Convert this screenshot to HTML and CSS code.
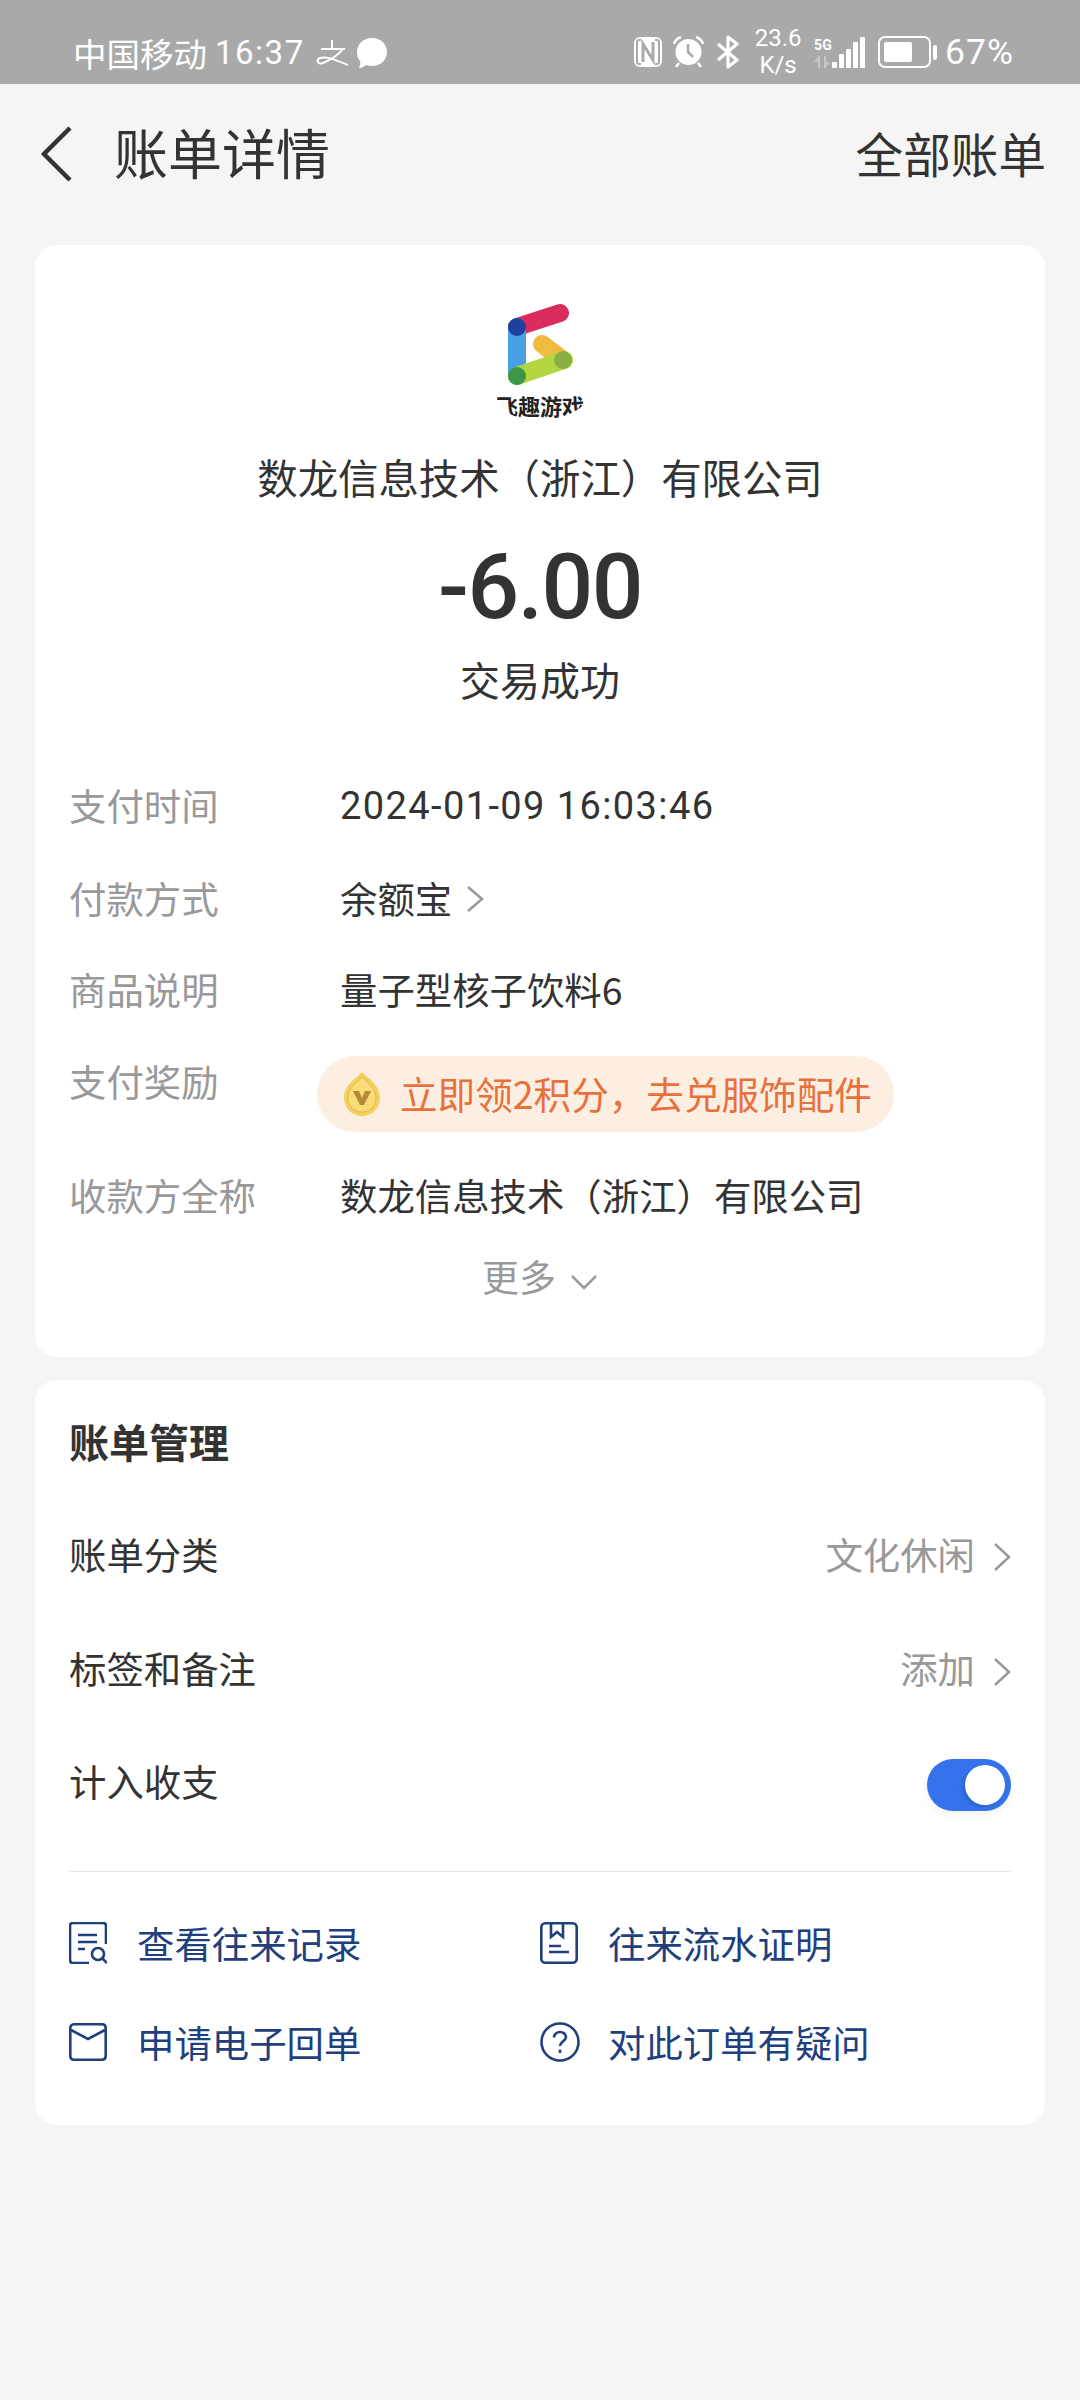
FILE: index.html
```html
<!DOCTYPE html>
<html lang="zh-CN">
<head>
    <meta charset="UTF-8">
    <meta name="viewport" content="width=device-width, initial-scale=1.0">
    <title>账单详情</title>
    <link rel="stylesheet" href="styles.css">
</head>
<body>
    <!-- 状态栏 -->
    <div class="status">
        <div class="status-left">
            <span class="carrier">中国移动</span>
            <span class="clock">16:37</span>
            <svg class="ic-zhi" width="32" height="28" viewBox="0 0 32 28" fill="none" stroke="#fff" stroke-width="2"><path d="M5 10H29M16 1V10M27 10C22 17 14 21 7 24C1 26 0 20 4 19C10 17 20 21 32 26"/></svg>
            <svg class="ic-chat" width="32" height="32" viewBox="0 0 32 32"><path fill="#fff" d="M16 1C24.500 1 31 7 31 15C31 23 24.500 29 16 29C14 29 12 28.500 10 28C8.500 29.500 6 31 3 31C4 29 4.500 26.500 4.200 24.500C2 22 1 18.500 1 15C1 7 7.500 1 16 1Z"/></svg>
        </div>
        <div class="status-right">
            <svg class="ic-nfc" width="28" height="30" viewBox="0 0 28 30"><rect width="28" height="30" rx="6" fill="#fff"/><path d="M7 3H5C3.500 3 3 4 3 5V25C3 26 3.500 27 5 27H7M21 3H23C24.500 3 25 4 25 5V25C25 26 24.500 27 23 27H21" fill="none" stroke="#a9a9a9" stroke-width="2"/><path d="M9 25V7L19 23V5" fill="none" stroke="#a9a9a9" stroke-width="3"/></svg>
            <svg class="ic-alarm" width="31" height="32" viewBox="0 0 31 32"><circle cx="15.500" cy="16" r="13" fill="#fff"/><path d="M15 8V16L20 21" fill="none" stroke="#a9a9a9" stroke-width="2.500"/><path d="M1 8C2 4 5 2 8 1M30 8C29 4 26 2 23 1M6 27L3 31M25 27L28 31" fill="none" stroke="#fff" stroke-width="2.500"/></svg>
            <svg class="ic-bt" width="24" height="34" viewBox="0 0 24 34"><path d="M2 9L21 25L12 32V2L21 9L2 25" fill="none" stroke="#fff" stroke-width="3.200" stroke-linejoin="round"/></svg>
            <div class="speed"><span>23.6</span><span>K/s</span></div>
            <div class="signal">
                <div class="net"><span>5G</span><svg width="16" height="12" viewBox="0 0 16 12"><path d="M4 0V12H6V0ZM0 6L4 1V6ZM10 0V12H12V0ZM12 6V11L16 6Z" fill="#fff" opacity=".35"/></svg></div>
                <div class="bars"><i class="b1"></i><i class="b2"></i><i class="b3"></i><i class="b4"></i><i class="b5"></i></div>
            </div>
            <div class="battery"><div class="cell"><div class="level"></div></div><div class="tip"></div></div>
            <span class="pct">67%</span>
        </div>
    </div>

    <!-- 标题栏 -->
    <div class="header">
        <svg class="back" width="32" height="56" viewBox="0 0 32 56" fill="none" stroke="#333" stroke-width="4.500"><path d="M30 2L4 28L30 54"/></svg>
        <div class="title">账单详情</div>
        <div class="all">全部账单</div>
    </div>

    <!-- 账单信息 -->
    <div class="card info">
        <div class="logo">
            <svg width="80" height="88" viewBox="0 0 80 88" fill="none" stroke-width="18" stroke-linecap="round">
                <path d="M17 24L60 10" stroke="#d92c5c"/>
                <path d="M42 41L63 57" stroke="#efbb40"/>
                <path d="M17 24V73" stroke="#47a0e4"/>
                <path d="M17 73L64 57" stroke="#b3d53f"/>
                <circle cx="17" cy="24" r="9" fill="#1f409c" stroke="none"/>
                <circle cx="17" cy="73" r="9" fill="#3d9548" stroke="none"/>
                <circle cx="63" cy="57" r="9" fill="#8ab045" stroke="none"/>
            </svg>
            <div class="logo-name">飞趣游戏</div>
        </div>
        <div class="payee">数龙信息技术（浙江）有限公司</div>
        <div class="amount">-6.00</div>
        <div class="state">交易成功</div>

        <div class="row"><span class="label">支付时间</span><span class="value date">2024-01-09 16:03:46</span></div>
        <div class="row">
            <span class="label">付款方式</span><span class="value">余额宝</span>
            <svg class="arrow-sm" width="20" height="30" viewBox="0 0 20 30" fill="none" stroke="#999" stroke-width="2.500"><path d="M3 3L17 15L3 27"/></svg>
        </div>
        <div class="row"><span class="label">商品说明</span><span class="value">量子型核子饮料6</span></div>
        <div class="row row-gift">
            <span class="label">支付奖励</span>
            <div class="pill">
                <svg class="coin" width="38" height="46" viewBox="0 0 38 46">
                    <path d="M19 1C24 7 37 13 37 27C37 37 29 45 19 45C9 45 1 37 1 27C1 13 14 7 19 1Z" fill="#f3cf5c"/>
                    <path d="M19 6C23 11 33 16 33 27C33 35 27 41 19 41C11 41 5 35 5 27C5 16 15 11 19 6Z" fill="#f8dc78" stroke="#e6bb45"/>
                    <path d="M10 20H16L19 27L22 20H28L21 34H17Z" fill="#b58a35"/>
                </svg>
                <span class="pill-text">立即领2积分，去兑服饰配件</span>
            </div>
        </div>
        <div class="row"><span class="label">收款方全称</span><span class="value">数龙信息技术（浙江）有限公司</span></div>
        <div class="more">
            <span>更多</span>
            <svg width="28" height="18" viewBox="0 0 28 18" fill="none" stroke="#999" stroke-width="2.500"><path d="M2 3L14 15L26 3"/></svg>
        </div>
    </div>

    <!-- 账单管理 -->
    <div class="card manage">
        <div class="manage-title">账单管理</div>
        <div class="item">
            <span>账单分类</span>
            <div class="item-right"><span>文化休闲</span><svg width="18" height="30" viewBox="0 0 18 30" fill="none" stroke="#999" stroke-width="2.500"><path d="M2 2L16 15L2 28"/></svg></div>
        </div>
        <div class="item">
            <span>标签和备注</span>
            <div class="item-right"><span>添加</span><svg width="18" height="30" viewBox="0 0 18 30" fill="none" stroke="#999" stroke-width="2.500"><path d="M2 2L16 15L2 28"/></svg></div>
        </div>
        <div class="item">
            <span class="item-name">计入收支</span>
            <div class="switch"><div class="knob"></div></div>
        </div>
        <div class="links">
            <div class="link">
                <svg width="38" height="42" viewBox="0 0 38 42" fill="none" stroke="#1f3f7d" stroke-width="2.600"><path d="M37 22V4C37 2 36 1 34 1H4C2 1 1 2 1 4V38C1 40 2 41 4 41H20"/><path d="M9 13H28M9 20H28M9 27H16"/><circle cx="29" cy="32" r="6"/><path d="M33 36L38 41"/></svg>
                <span>查看往来记录</span>
            </div>
            <div class="link">
                <svg width="38" height="42" viewBox="0 0 38 42" fill="none" stroke="#1f3f7d" stroke-width="2.600"><rect x="1.300" y="1.300" width="35.400" height="39.400" rx="4"/><path d="M11 2V15L17 10L23 15V2M9 24H21M9 30H29"/></svg>
                <span>往来流水证明</span>
            </div>
            <div class="link">
                <svg width="38" height="38" viewBox="0 0 38 38" fill="none" stroke="#1f3f7d" stroke-width="2.600"><path d="M5 1.300H33C35.500 1.300 36.700 3 36.700 5V33C36.700 35.500 35.500 36.700 33 36.700H5C2.500 36.700 1.300 35.500 1.300 33V5C1.300 3 2.500 1.300 5 1.300Z"/><path d="M2 7L19 16L36 7"/></svg>
                <span>申请电子回单</span>
            </div>
            <div class="link">
                <svg class="ic-ask" width="40" height="40" viewBox="0 0 40 40" fill="none" stroke="#1f3f7d" stroke-width="2.600"><circle cx="20" cy="20" r="18.500"/><path d="M14 15.500C14 12 17 10 20 10C23 10 26 12 26 15C26 19 20 19.500 20 24"/><path d="M20 27.500V31"/></svg>
                <span>对此订单有疑问</span>
            </div>
        </div>
    </div>
</body>
</html>
```

FILE: styles.css
```css
*{
    margin: 0;
    padding: 0;
    box-sizing: border-box;
}
body{
    width: 1080px;
    height: 2400px;
    background: #f5f5f5;
    color: #333;
    font-family: "Noto Sans CJK SC", "Noto Sans", sans-serif;
    overflow: hidden;
}
svg{
    display: block;
    flex: none;
}

/* 状态栏 */
.status{
    height: 84px;
    background: #a9a9a9;
    color: #fff;
    padding: 31px 66px 0 73px;
    display: flex;
    justify-content: space-between;
    align-items: flex-start;
}
.status-left{
    display: flex;
    align-items: center;
    height: 44px;
}
.carrier{
    font-size: 33.500px;
    line-height: 44px;
}
.clock{
    font-family: Roboto, sans-serif;
    font-size: 33px;
    line-height: 44px;
    margin-left: 8px;
    letter-spacing: 1.500px;
}
.ic-zhi{
    margin-left: 11px;
}
.ic-chat{
    margin-left: 8px;
}
.status-right{
    display: flex;
    align-items: center;
    height: 44px;
    gap: 13px;
    margin-top: -1px;
}
.ic-nfc{
    margin-right: -2px;
}
.ic-alarm{
    margin-right: -1px;
}
.speed{
    width: 50px;
    font-family: Roboto, sans-serif;
    font-size: 24px;
    line-height: 27px;
    text-align: center;
    display: flex;
    flex-direction: column;
}
.signal{
    display: flex;
    align-items: flex-end;
    height: 32px;
    gap: 1px;
    margin-left: -2px;
}
.net{
    width: 17px;
    font-family: Roboto, sans-serif;
    font-weight: 700;
    font-size: 14px;
    line-height: 18px;
    display: flex;
    flex-direction: column;
    gap: 2px;
}
.bars{
    display: flex;
    align-items: flex-end;
    gap: 2px;
}
.bars i{
    display: block;
    width: 5px;
    background: #fff;
    border-radius: 1px;
}
.bars .b1{ height: 6px; }
.bars .b2{ height: 14px; }
.bars .b3{ height: 19px; }
.bars .b4{ height: 26px; }
.bars .b5{ height: 31px; }
.battery{
    display: flex;
    align-items: center;
    gap: 2px;
}
.cell{
    width: 53px;
    height: 32px;
    border: 2.500px solid #fff;
    border-radius: 7px;
    padding: 4px;
}
.level{
    width: 28px;
    height: 100%;
    background: #fff;
    border-radius: 2px;
}
.tip{
    width: 4px;
    height: 15px;
    background: #fff;
    border-radius: 2px;
}
.pct{
    font-family: Roboto, sans-serif;
    font-size: 35.500px;
    line-height: 44px;
    margin-left: -5px;
    letter-spacing: 1px;
}

/* 标题栏 */
.header{
    height: 161px;
    padding: 0 34px 22px 40px;
    display: flex;
    align-items: center;
}
.title{
    font-size: 54px;
    margin-left: 42px;
    line-height: 70px;
    margin-top: -3px;
}
.all{
    font-size: 47.600px;
    margin-left: auto;
    line-height: 70px;
    margin-top: -1px;
}

.card{
    margin: 0 35px;
    width: 1010px;
    background: #fff;
    border-radius: 22px;
}

/* 账单信息 */
.info{
    height: 1112px;
    padding: 30px 34px 0;
}
.logo{
    width: 140px;
    height: 146px;
    margin: 0 auto;
    border-radius: 50%;
    overflow: hidden;
    padding-top: 28px;
    display: flex;
    flex-direction: column;
    align-items: center;
}
.logo-name{
    margin-top: 0;
    font-size: 22px;
    font-weight: 700;
    line-height: 28px;
    color: #222;
    white-space: nowrap;
}
.payee{
    margin-top: 26px;
    font-size: 40.400px;
    line-height: 60px;
    text-align: center;
}
.amount{
    margin-top: 30px;
    font-family: Roboto, sans-serif;
    font-weight: 500;
    font-size: 91px;
    letter-spacing: -1.500px;
    line-height: 100px;
    text-align: center;
}
.state{
    margin-top: 17px;
    font-size: 40px;
    line-height: 50px;
    text-align: center;
}
.row{
    height: 91.500px;
    display: flex;
    align-items: center;
    font-size: 37.400px;
}
.state + .row{
    margin-top: 55px;
    margin-bottom: 1.500px;
}
.label{
    width: 271px;
    color: #999;
    flex: none;
}
.date{
    font-family: Roboto, sans-serif;
    font-size: 38px;
    letter-spacing: 1.400px;
    margin-top: 3px;
}
.arrow-sm{
    margin-left: 13px;
    margin-top: 3px;
}
.row-gift{
    height: 114.500px;
    align-items: flex-start;
    padding-top: 20.500px;
}
.row-gift .label{
    line-height: 51px;
}
.pill{
    width: 577px;
    height: 76px;
    margin-left: -23px;
    background: #fdeee2;
    border-radius: 38px;
    color: #e8703a;
    display: flex;
    align-items: center;
    padding-left: 26px;
    font-size: 37.600px;
}
.pill-text{
    margin-top: -3px;
}
.coin{
    margin-right: 19px;
}
.more{
    height: 70px;
    display: flex;
    align-items: center;
    justify-content: center;
    gap: 14px;
    color: #999;
    font-size: 37px;
}
.more svg{
    margin-top: 11px;
}

/* 账单管理 */
.manage{
    height: 745px;
    margin-top: 23px;
    padding: 0 34px;
}
.manage-title{
    height: 124px;
    line-height: 122px;
    font-size: 40px;
    font-weight: 700;
}
.item{
    height: 114.500px;
    display: flex;
    justify-content: space-between;
    align-items: center;
    font-size: 37.400px;
}
.item:nth-child(2){
    margin-top: -7.500px;
}
.item-name{
    margin-top: -3px;
}
.item-right{
    display: flex;
    align-items: center;
    gap: 18px;
    color: #999;
}
.item-right svg{
    margin-top: 7px;
}
.switch{
    width: 84px;
    height: 52px;
    margin-top: 4px;
    border-radius: 26px;
    background: #3572ec;
    padding: 6px;
    display: flex;
    justify-content: flex-end;
    box-shadow: 0 4px 10px rgba(0, 0, 0, .05);
}
.knob{
    width: 40px;
    height: 40px;
    border-radius: 50%;
    background: #fff;
    box-shadow: -2px 2px 4px rgba(0, 0, 0, .15);
}
.links{
    margin-top: 30.500px;
    border-top: 1px solid #e6e6e6;
    padding-top: 22px;
    display: grid;
    grid-template-columns: 471px 1fr;
    grid-auto-rows: 99px;
}
.link{
    display: flex;
    align-items: center;
    color: #1f3f7d;
    font-size: 37.400px;
}
.link svg{
    margin-right: 30px;
}
.link .ic-ask{
    margin-right: 28px;
}
```
